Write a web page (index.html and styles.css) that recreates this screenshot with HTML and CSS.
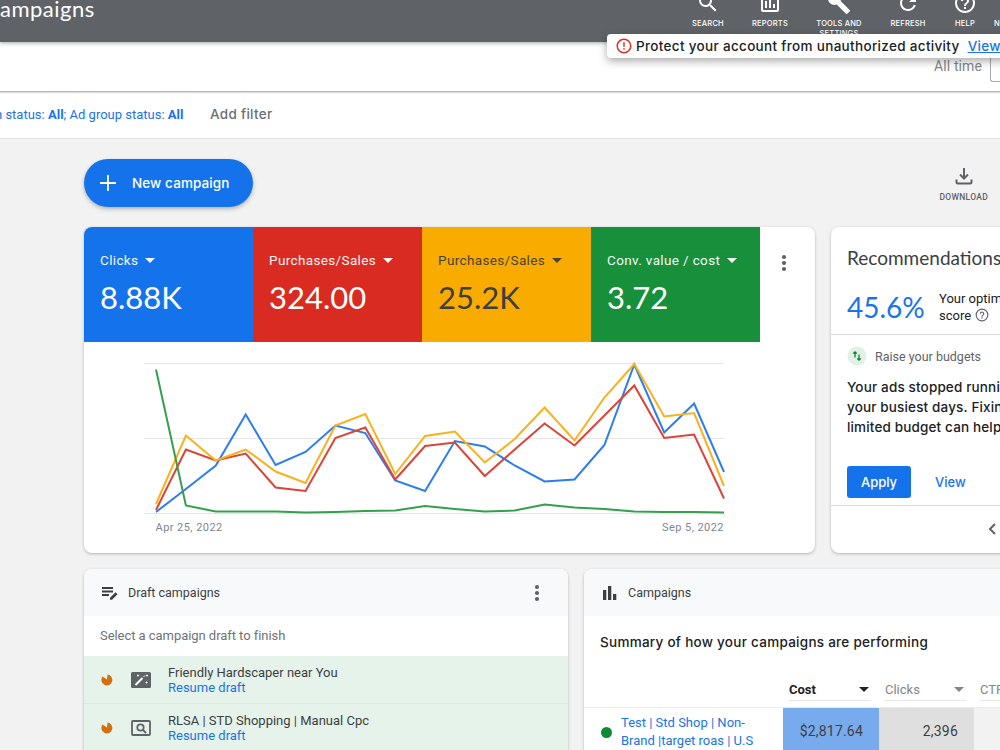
FILE: index.html
```html
<!DOCTYPE html>
<html lang="en">
<head>
  <meta charset="UTF-8">
  <meta name="viewport" content="width=device-width, initial-scale=1.0">
  <title>Campaigns</title>
  <link rel="stylesheet" href="styles.css">
</head>
<body>
  <header>
    <h1>ampaigns</h1>
    <nav>
      <a class="tool"><svg viewBox="0 0 24 24"><path d="M15.5 14h-.79l-.28-.27A6.47 6.47 0 0 0 16 9.5 6.5 6.5 0 1 0 9.5 16c1.61 0 3.09-.59 4.23-1.57l.27.28v.79l5 4.99L20.49 19l-4.99-5zm-6 0C7.01 14 5 11.99 5 9.5S7.01 5 9.5 5 14 7.01 14 9.5 11.99 14 9.5 14z"/></svg>SEARCH</a>
      <a class="tool"><svg viewBox="0 0 24 24"><path d="M19 3H5c-1.1 0-2 .9-2 2v14c0 1.1.9 2 2 2h14c1.1 0 2-.9 2-2V5c0-1.1-.9-2-2-2zm0 16H5V5h14v14zM7 10h2v7H7zm4-3h2v10h-2zm4 6h2v4h-2z"/></svg>REPORTS</a>
      <a class="tool"><svg viewBox="0 0 24 24"><path d="M22.7 19l-9.1-9.1c.9-2.3.4-5-1.5-6.9-2-2-5-2.4-7.4-1.3L9 6 6 9 1.6 4.7C.4 7.1.9 10.1 2.9 12.1c1.9 1.9 4.6 2.4 6.9 1.5l9.1 9.1c.4.4 1 .4 1.4 0l2.3-2.3c.5-.4.5-1.1.1-1.4z"/></svg>TOOLS AND<br>SETTINGS</a>
      <a class="tool"><svg viewBox="0 0 24 24"><path d="M17.65 6.35A7.958 7.958 0 0 0 12 4c-4.42 0-7.99 3.58-7.99 8s3.57 8 7.99 8c3.73 0 6.84-2.55 7.73-6h-2.08A5.99 5.99 0 0 1 12 18c-3.31 0-6-2.69-6-6s2.69-6 6-6c1.66 0 3.14.69 4.22 1.78L13 11h7V4l-2.35 2.35z"/></svg>REFRESH</a>
      <a class="tool"><svg viewBox="0 0 24 24"><path d="M11 18h2v-2h-2v2zm1-16C6.48 2 2 6.48 2 12s4.48 10 10 10 10-4.48 10-10S17.52 2 12 2zm0 18c-4.41 0-8-3.59-8-8s3.59-8 8-8 8 3.59 8 8-3.59 8-8 8zm0-14c-2.21 0-4 1.79-4 4h2c0-1.1.9-2 2-2s2 .9 2 2c0 2-3 1.75-3 5h2c0-2.25 3-2.5 3-5 0-2.21-1.79-4-4-4z"/></svg>HELP</a>
      <a class="tool last">NOTIFICATIONS</a>
    </nav>
    <div class="alert">
      <svg viewBox="0 0 24 24"><path d="M11 15h2v2h-2v-2zm0-8h2v6h-2V7zm1-5C6.47 2 2 6.5 2 12a10 10 0 1 0 10-10zm0 18a8 8 0 1 1 0-16 8 8 0 0 1 0 16z"/></svg>
      <span>Protect your account from unauthorized activity</span>
      <a>View</a>
    </div>
  </header>

  <div class="date-bar">
    <span>All time</span>
    <div class="date-box"></div>
  </div>

  <div class="filter-bar">
    <span class="filters">n status: <b>All</b>; Ad group status: <b>All</b></span>
    <span class="add-filter">Add filter</span>
  </div>

  <main>
    <div class="actions">
      <button class="new-btn">
        <svg viewBox="0 0 18 18"><path d="M8 0h2v8h8v2h-8v8H8v-8H0V8h8z"/></svg>
        New campaign
      </button>
      <a class="download">
        <svg viewBox="0 0 18 18"><path d="M9 1v10M5 7.5l4 4 4-4M1.5 12.500v2.500a1.500 1.500 0 0 0 1.500 1.500h12a1.500 1.500 0 0 0 1.500-1.500v-2.500"/></svg>
        DOWNLOAD
      </a>
    </div>

    <div class="row">
      <section class="card overview">
        <div class="scores">
          <div class="score blue"><div class="metric">Clicks <i class="caret"></i></div><div class="value">8.88K</div></div>
          <div class="score red"><div class="metric">Purchases/Sales <i class="caret"></i></div><div class="value">324.00</div></div>
          <div class="score yellow"><div class="metric">Purchases/Sales <i class="caret"></i></div><div class="value">25.2K</div></div>
          <div class="score green"><div class="metric">Conv. value / cost <i class="caret"></i></div><div class="value">3.72</div></div>
          <svg class="dots" viewBox="0 0 6 18"><circle cx="3" cy="3" r="2.1"/><circle cx="3" cy="9" r="2.1"/><circle cx="3" cy="15" r="2.1"/></svg>
        </div>
        <svg class="chart" viewBox="0 0 732 211">
          <path class="grid" d="M60 21.5H640M60 96.5H640M60 171.5H640M72 171v5M640 171v5"/>
          <polyline class="line-blue" points="72,170 101.9,147 131.8,123.5 161.7,72.5 191.6,123 221.5,110 251.4,83.5 281.3,91 311.2,138.5 341.1,149 370.9,99 400.8,104.5 430.7,123.5 460.6,139.5 490.5,137.5 520.4,103 550.3,22.5 580.2,90.5 610.1,61.5 640,130"/>
          <polyline class="line-red" points="72,168 101.9,107.5 131.8,118.5 161.7,111.5 191.6,145.5 221.5,149 251.4,96 281.3,85.5 311.2,137.5 341.1,104 370.9,100.5 400.8,134 430.7,107.5 460.6,81.5 490.5,103.5 520.4,73.5 550.3,43.5 580.2,96 610.1,92.5 640,156.5"/>
          <polyline class="line-yellow" points="72,162 101.9,93.5 131.8,118.5 161.7,107.5 191.6,129.5 221.5,141 251.4,83.5 281.3,72 311.2,132 341.1,94 370.9,89.5 400.8,120.5 430.7,97 460.6,65.5 490.5,98.5 520.4,55.5 550.3,22 580.2,74.5 610.1,71 640,144"/>
          <polyline class="line-green" points="72,27.5 101.9,163.5 131.8,169.5 161.7,169.5 191.6,169.5 221.5,170.5 251.4,170 281.3,169 311.2,168.5 341.1,164 370.9,167 400.8,169.5 430.7,168.5 460.6,162.5 490.5,165.5 520.4,167 550.3,169.5 580.2,170 610.1,170 640,170.5"/>
          <text x="71.5" y="189">Apr 25, 2022</text>
          <text x="640" y="189" text-anchor="end">Sep 5, 2022</text>
        </svg>
      </section>

      <section class="card recs">
        <div class="recs-top">
          <h2>Recommendations</h2>
          <div class="opt">
            <span class="percent">45.6%</span>
            <div class="opt-text">Your optimization<br>score <svg viewBox="0 0 24 24"><path d="M11 18h2v-2h-2v2zm1-17a11 11 0 1 0 0 22 11 11 0 0 0 0-22zm0 20a9 9 0 1 1 0-18 9 9 0 0 1 0 18zm0-15c-2.21 0-4 1.79-4 4h2c0-1.1.9-2 2-2s2 .9 2 2c0 2-3 1.75-3 5h2c0-2.25 3-2.5 3-5 0-2.21-1.79-4-4-4z"/></svg></div>
          </div>
        </div>
        <div class="recs-body">
          <div class="rec-type">
            <svg viewBox="0 0 20 20"><circle cx="10" cy="10" r="9.5"/><path d="M8 11.500V6M6.300 7.500L8 5.800l1.700 1.700M12 8.500V14M10.300 12.500l1.700 1.700 1.700-1.700"/></svg>
            Raise your budgets
          </div>
          <p>Your ads stopped running on<br>your busiest days. Fixing your<br>limited budget can help</p>
          <div class="rec-actions">
            <button class="apply-btn">Apply</button>
            <a>View</a>
          </div>
        </div>
        <div class="pager"><svg viewBox="0 0 8 12"><path d="M7 1L2 6l5 5"/></svg></div>
      </section>
    </div>

    <div class="row">
      <section class="card drafts">
        <div class="card-head">
          <svg class="head-icon" viewBox="0 0 18 16"><path d="M1 2h11v2H1zM1 5.500h11v2H1zM1 9h7v2H1zM9 12.800l5.500-5.500 2 2-5.500 5.500H9z"/></svg>
          <span>Draft campaigns</span>
          <svg class="dots" viewBox="0 0 6 18"><circle cx="3" cy="3" r="2.1"/><circle cx="3" cy="9" r="2.1"/><circle cx="3" cy="15" r="2.1"/></svg>
        </div>
        <div class="hint">Select a campaign draft to finish</div>
        <div class="draft">
          <svg class="status" viewBox="0 0 12 12"><path d="M6.500.5A5.500 5.500 0 1 1 1.600 2.500L6 5.500z"/></svg>
          <svg class="type" viewBox="0 0 20 16"><rect width="20" height="16" rx="1.5"/><path class="wand" d="M4.500 13l7-7"/><path class="spark" d="M12.500 5l1.500-1.500M6 3.500h2M7 2.500v2M15 3.500h2M16 2.500v2M14.500 10.500h2M15.500 9.500v2"/></svg>
          <div><div class="name">Friendly Hardscaper near You</div><a>Resume draft</a></div>
        </div>
        <div class="draft">
          <svg class="status" viewBox="0 0 12 12"><path d="M6.500.5A5.500 5.500 0 1 1 1.600 2.500L6 5.500z"/></svg>
          <svg class="type outline" viewBox="0 0 20 16"><rect x="1" y="1" width="18" height="14" rx="1"/><circle cx="9.5" cy="7.5" r="3.2"/><path d="M12 10l3 3"/></svg>
          <div><div class="name">RLSA | STD Shopping | Manual Cpc</div><a>Resume draft</a></div>
        </div>
      </section>

      <section class="card campaigns">
        <div class="card-head">
          <svg class="head-icon" viewBox="0 0 18 16"><path d="M2 5h3.300v10H2zM7 1h3.300v14H7zM12 9h3.300v6H12z"/></svg>
          <span>Campaigns</span>
        </div>
        <h3>Summary of how your campaigns are performing</h3>
        <div class="table">
          <div class="th"></div>
          <div class="th active"><span>Cost <i class="caret"></i></span></div>
          <div class="th"><span>Clicks <i class="caret"></i></span></div>
          <div class="th"><span>CTR <i class="caret"></i></span></div>
          <div class="td campaign"><i class="enabled"></i><a>Test | Std Shop | Non-<br>Brand |target roas | U.S</a></div>
          <div class="td cost">$2,817.64</div>
          <div class="td clicks">2,396</div>
          <div class="td ctr"></div>
        </div>
      </section>
    </div>
  </main>
</body>
</html>
```

FILE: styles.css
```css
* {
  box-sizing: border-box;
}
body {
  margin: 0;
  width: 1000px;
  height: 750px;
  overflow: hidden;
  background: #f2f2f2;
  font-family: Roboto, sans-serif;
  color: #3c4043;
}
h1, h2, h3, p {
  margin: 0;
  font-weight: 400;
}
a {
  color: #1a73e8;
}
button {
  border: none;
  color: #fff;
  background: #1473ea;
  font-family: Inter, sans-serif;
  font-weight: 500;
}
svg {
  display: block;
  flex: none;
}

/* top bar */
header {
  position: relative;
  z-index: 2;
  height: 42px;
  display: flex;
  background: #5f6368;
  box-shadow: 0 1px 4px rgba(0,0,0,0.35);
}
h1 {
  flex: none;
  width: 677px;
  margin-top: -5px;
  font: 400 22px/28px Lato, sans-serif;
  letter-spacing: 0.5px;
  color: #fff;
}
nav {
  height: 42px;
  overflow: hidden;
  display: grid;
  grid-template-columns: 62px 62px 76px 62px 52px 60px;
}
.tool {
  color: #fff;
  font: 500 7.5px/10px Inter, sans-serif;
  letter-spacing: 0.2px;
  text-align: center;
}
.tool svg {
  width: 24px;
  height: 24px;
  margin: -9px auto 4px;
  fill: #fff;
}
.tool.last {
  padding: 19px 0 0 3px;
  text-align: left;
}
.alert {
  position: absolute;
  left: 607px;
  top: 34px;
  width: 420px;
  height: 24px;
  padding-left: 8px;
  display: flex;
  align-items: center;
  border-radius: 4px;
  background: #fff;
  box-shadow: 0 3px 8px rgba(0,0,0,0.35);
  font: 500 13.5px/24px Inter, sans-serif;
  letter-spacing: 0.32px;
  color: #202124;
  white-space: nowrap;
}
.alert svg {
  width: 18px;
  height: 18px;
  margin-right: 3px;
  fill: #d93025;
}
.alert a {
  margin-left: 8px;
  text-decoration: underline;
}

/* date and filters */
.date-bar {
  height: 50px;
  display: flex;
  justify-content: flex-end;
  background: #fff;
  border-bottom: 1px solid #bbb;
  box-shadow: 0 1px 1px rgba(0,0,0,0.15);
  position: relative;
  font-size: 14px;
  line-height: 49px;
  letter-spacing: 0.1px;
  color: #80868b;
}
.date-box {
  width: 10px;
  height: 40px;
  margin-left: 8px;
  border: 1px solid #aaa;
  border-width: 0 0 1px 1px;
  border-radius: 0 0 0 3px;
}
.filter-bar {
  height: 47px;
  padding-bottom: 2px;
  display: flex;
  align-items: center;
  background: #fff;
  border-bottom: 1px solid #e4e4e4;
  font-size: 13px;
}
.filters {
  width: 211px;
  margin-left: -5px;
  color: #1a73e8;
  white-space: nowrap;
}
.add-filter {
  margin-left: 4px;
  font: 500 13.5px Inter, sans-serif;
  letter-spacing: 0.3px;
  color: #6b6f73;
}

/* page */
main {
  padding: 20px 0 0 84px;
}
.actions {
  height: 68px;
  display: flex;
  justify-content: space-between;
  padding-right: 12px;
}
.new-btn {
  width: 169px;
  height: 48px;
  padding: 0 0 0 16px;
  display: flex;
  align-items: center;
  gap: 16px;
  border-radius: 24px;
  box-shadow: 0 2px 4px rgba(60,64,67,0.35);
  font-size: 13.5px;
  letter-spacing: 0.1px;
}
.new-btn svg {
  width: 16px;
  height: 16px;
  fill: #fff;
}
.download {
  padding-top: 8px;
  font-size: 8.5px;
  font-weight: 500;
  letter-spacing: 0.3px;
  color: #5f6368;
}
.download svg {
  width: 18px;
  height: 18px;
  margin: 0 auto 7px;
  fill: none;
  stroke: #5f6368;
  stroke-width: 2;
}
.row {
  width: 1232px;
  display: flex;
  gap: 16px;
  margin-bottom: 16px;
}
.card {
  overflow: hidden;
  border-radius: 8px;
  background: #fff;
  box-shadow: 0 1px 3px rgba(60,64,67,0.35);
}
.dots {
  width: 6px;
  height: 18px;
  fill: #5f6368;
}
.caret {
  display: inline-block;
  border: 5px solid transparent;
  border-top-color: currentColor;
  border-bottom: none;
}

/* overview chart */
.overview {
  width: 731px;
  height: 326px;
}
.scores {
  display: grid;
  grid-template-columns: repeat(4, 169px) 1fr;
}
.scores .dots {
  margin: 27px 0 0 21px;
}
.score {
  height: 115px;
  padding: 23px 0 0 16px;
  color: #fff;
}
.blue { background: #1473ea; }
.red { background: #d92b21; }
.yellow { background: #f9ab00; color: #3c4043; }
.green { background: #188f3b; }
.metric {
  display: flex;
  align-items: center;
  gap: 7px;
  font-size: 13.5px;
  line-height: 20px;
  letter-spacing: 0.36px;
  white-space: nowrap;
  opacity: 0.95;
}
.value {
  margin-top: 8px;
  font: 400 31px/38px Lato, sans-serif;
}
.chart {
  width: 732px;
  height: 211px;
}
.chart text {
  font-size: 11px;
  letter-spacing: 0.45px;
  fill: #80868b;
}
.chart polyline {
  fill: none;
  stroke-width: 2;
}
.grid { stroke: #e6e6e6; }
.line-blue { stroke: #2b7df0; }
.line-red { stroke: #db4437; }
.line-yellow { stroke: #fbb01c; }
.line-green { stroke: #34a04f; }

/* recommendations */
.recs {
  width: 484px;
  height: 326px;
}
.recs-top {
  height: 108px;
  padding: 18px 16px 0;
  border-bottom: 1px solid #dadce0;
}
h2 {
  font: 400 19px/26px Lato, sans-serif;
}
.opt {
  display: flex;
  gap: 16px;
  margin-top: 19px;
}
.percent {
  width: 76px;
  font: 400 28px/34px Lato, sans-serif;
  color: #1a73e8;
}
.opt-text {
  font-size: 13px;
  line-height: 17px;
  color: #202124;
}
.opt-text svg {
  display: inline-block;
  width: 14px;
  height: 14px;
  margin-left: 1px;
  vertical-align: -2px;
  fill: #5f6368;
}
.recs-body {
  height: 171px;
  padding: 11px 16px 0;
  border-bottom: 1px solid #dadce0;
}
.rec-type {
  display: flex;
  align-items: center;
  gap: 8px;
  font-size: 12.5px;
  color: #5f6368;
}
.rec-type svg {
  width: 20px;
  height: 20px;
}
.rec-type circle { fill: #e0f2e5; }
.rec-type path {
  fill: none;
  stroke: #188038;
  stroke-width: 1.3;
}
.recs-body p {
  margin-top: 11px;
  font: 500 13.5px/20px Inter, sans-serif;
  letter-spacing: 0.15px;
  color: #202124;
}
.rec-actions {
  display: flex;
  align-items: center;
  gap: 24px;
  margin-top: 29px;
  font: 500 13px Inter, sans-serif;
}
.apply-btn {
  width: 64px;
  height: 32px;
  border-radius: 3px;
  font-size: 13px;
}
.pager {
  padding: 17px 0 0 157px;
}
.pager svg {
  width: 8px;
  height: 12px;
  fill: none;
  stroke: #5f6368;
  stroke-width: 2;
}

/* bottom cards */
.card-head {
  height: 47px;
  padding: 0 28px 0 17px;
  display: flex;
  align-items: center;
  gap: 9px;
  background: #f8f9fb;
  font-size: 12.5px;
}
.head-icon {
  width: 18px;
  height: 16px;
  fill: #3c4043;
}
.card-head .dots {
  margin-left: auto;
}
.drafts {
  width: 484px;
  height: 230px;
}
.hint {
  height: 40px;
  padding-left: 16px;
  font-size: 13px;
  line-height: 40px;
  letter-spacing: -0.05px;
  color: #6f7377;
}
.draft {
  height: 48px;
  padding-left: 17px;
  display: flex;
  align-items: center;
  background: #e6f3ea;
  border-bottom: 1px solid #dbe8df;
  font-size: 13px;
  line-height: 15px;
}
.status {
  width: 12px;
  height: 12px;
  margin-right: 18px;
  fill: #d56e0c;
}
.type {
  width: 20px;
  height: 16px;
  margin-right: 17px;
  fill: #5f6368;
}
.wand, .spark {
  stroke: #fff;
  stroke-width: 2;
}
.spark {
  stroke-width: 1;
}
.outline {
  fill: none;
  stroke: #5f6368;
  stroke-width: 1.8;
}
.campaigns {
  width: 732px;
  height: 230px;
}
h3 {
  height: 55px;
  padding: 16px 0 0 16px;
  font: 500 13.5px/20px Inter, sans-serif;
  letter-spacing: 0.27px;
  color: #202124;
}
.table {
  display: grid;
  grid-template-columns: 199px 96px 95px 95px;
  font-size: 13px;
}
.th {
  height: 37px;
  padding: 7px 8px 0 6px;
  border-bottom: 1px solid #ececec;
  color: #80868b;
}
.th span {
  height: 23px;
  display: flex;
  align-items: center;
  justify-content: space-between;
  border-bottom: 1px solid #e8e8e8;
}
.th:first-child {
  padding: 0;
}
.th .caret {
  margin-right: 2px;
}
.th.active {
  font-weight: 700;
  color: #202124;
}
.td {
  height: 48px;
  font-size: 14px;
  line-height: 46px;
  letter-spacing: 0.2px;
  padding-right: 16px;
  text-align: right;
}
.campaign {
  display: flex;
  align-items: center;
  gap: 9px;
  padding-left: 17px;
  text-align: left;
  font-size: 13px;
  line-height: 18px;
  letter-spacing: 0;
  white-space: nowrap;
}
.enabled {
  width: 11px;
  height: 11px;
  border-radius: 50%;
  background: #0d8a32;
}
.cost { background: #78aaee; }
.clicks { background: #dfdfdf; }
.ctr { background: #f2f2f2; }
```
